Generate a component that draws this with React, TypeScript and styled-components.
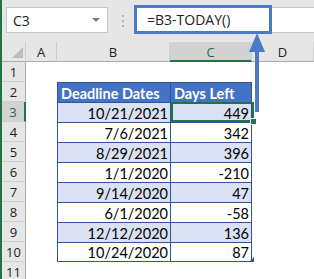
import React from "react";
import styled, { createGlobalStyle } from "styled-components";

const Global = createGlobalStyle`
  html, body { margin: 0; padding: 0; background: #ffffff; }
  body { width: 314px; height: 279px; overflow: hidden; }
  * { box-sizing: border-box; }
`;

const Frame = styled.div`
  position: relative;
  width: 314px;
  height: 279px;
  overflow: hidden;
  border-left: 2px solid #217346;
  background: #ffffff;
  font-family: "Open Sans", "Liberation Sans", sans-serif;
`;

const TopBar = styled.div`
  height: 42px;
  background: #e6e6e6;
  display: flex;
  align-items: flex-start;
  padding-left: 4px;
`;

const NameBox = styled.div`
  margin-top: 7px;
  width: 102px;
  height: 26px;
  background: #ffffff;
  border: 1px solid #c6c6c6;
  display: flex;
  align-items: center;
  justify-content: space-between;
  padding: 0 6px 0 6px;
  font-size: 14px;
  color: #222;
`;

const Caret = styled.span`
  width: 0;
  height: 0;
  border-left: 4px solid transparent;
  border-right: 4px solid transparent;
  border-top: 4px solid #7a7a7a;
  margin-right: 1px;
`;

const Dots = styled.div`
  margin: 15px 0 0 14px;
  width: 2px;
  display: flex;
  flex-direction: column;
  gap: 3px;
  span {
    width: 2px;
    height: 2px;
    background: #b4b4b4;
  }
`;

const FormulaField = styled.div`
  position: relative;
  margin: 7px 0 0 10px;
  flex: 1;
  height: 26px;
  background: #ffffff;
  border-top: 1px solid #c6c6c6;
  border-bottom: 1px solid #c6c6c6;
`;

const Highlight = styled.div`
  position: absolute;
  left: 0;
  top: -3px;
  width: 138px;
  height: 29px;
  border: 3px solid #4a7bc8;
  display: flex;
  align-items: center;
  padding-left: 10px;
  font-size: 14px;
  color: #222;
`;

const Sheet = styled.div`
  display: grid;
  grid-template-columns: 24px 31px 113px 82px 1fr;
  grid-auto-rows: 20px;
`;

const ColHead = styled.div<{ $sel?: boolean }>`
  background: ${(p) => (p.$sel ? "#d2d2d2" : "#e6e6e6")};
  border-right: 1px solid #cfcfcf;
  border-bottom: ${(p) => (p.$sel ? "2px solid #217346" : "1px solid #ababab")};
  display: flex;
  align-items: center;
  justify-content: center;
  font-size: 13px;
  color: ${(p) => (p.$sel ? "#1e6b41" : "#222")};
  padding-top: ${(p) => (p.$sel ? "1px" : "0")};
`;

const Corner = styled.div`
  background: #e6e6e6;
  border-right: 1px solid #cfcfcf;
  border-bottom: 1px solid #ababab;
  display: flex;
  align-items: flex-end;
  justify-content: flex-end;
  padding: 0 2px 3px 0;
`;

const RowHead = styled.div<{ $sel?: boolean }>`
  background: ${(p) => (p.$sel ? "#d2d2d2" : "#e6e6e6")};
  border-right: ${(p) => (p.$sel ? "2px solid #217346" : "1px solid #ababab")};
  border-bottom: 1px solid #cfcfcf;
  display: flex;
  align-items: center;
  justify-content: center;
  font-size: 13px;
  color: ${(p) => (p.$sel ? "#1e6b41" : "#222")};
`;

const Blank = styled.div``;

const TCell = styled.div<{ $head?: boolean; $band?: boolean; $left?: boolean; $last?: boolean }>`
  background: ${(p) => (p.$head ? "#4472c4" : p.$band ? "#d9e1f2" : "#ffffff")};
  border-top: 1px solid #2f5597;
  border-bottom: ${(p) => (p.$last ? "1px solid #2f5597" : "none")};
  border-left: 1px solid #2f5597;
  border-right: ${(p) => (p.$left ? "none" : "1px solid #2f5597")};
  display: flex;
  align-items: center;
  justify-content: ${(p) => (p.$head ? "flex-start" : "flex-end")};
  padding: ${(p) => (p.$head ? "1px 0 0 3px" : "1px 2px 0 0")};
  font-family: Lato, "Liberation Sans", sans-serif;
  font-size: 14.5px;
  font-weight: ${(p) => (p.$head ? 700 : 400)};
  color: ${(p) => (p.$head ? "#ffffff" : "#000000")};
  white-space: nowrap;
`;

const Selection = styled.div`
  position: absolute;
  left: 169px;
  top: 102px;
  width: 83px;
  height: 20px;
  border: 2px solid #217346;
  pointer-events: none;
`;

const FillHandle = styled.div`
  position: absolute;
  left: 248px;
  top: 118px;
  width: 7px;
  height: 7px;
  background: #217346;
  border: 1px solid #ffffff;
`;

const ResizeMark = styled.svg`
  position: absolute;
  left: 247px;
  top: 257px;
`;

const Arrow = styled.svg`
  position: absolute;
  left: 244px;
  top: 33px;
`;

const rows: [string, string][] = [
  ["10/21/2021", "449"],
  ["7/6/2021", "342"],
  ["8/29/2021", "396"],
  ["1/1/2020", "-210"],
  ["9/14/2020", "47"],
  ["6/1/2020", "-58"],
  ["12/12/2020", "136"],
  ["10/24/2020", "87"],
];

export default function App() {
  return (
    <>
      <Global />
      <Frame>
        <TopBar>
          <NameBox>
            <span>C3</span>
            <Caret />
          </NameBox>
          <Dots>
            <span />
            <span />
            <span />
          </Dots>
          <FormulaField>
            <Highlight>=B3-TODAY()</Highlight>
          </FormulaField>
        </TopBar>
        <Sheet>
          <Corner>
            <svg width="11" height="11" viewBox="0 0 11 11">
              <polygon points="11,0 11,11 0,11" fill="#bdbdbd" />
            </svg>
          </Corner>
          <ColHead>A</ColHead>
          <ColHead>B</ColHead>
          <ColHead $sel>C</ColHead>
          <ColHead>D</ColHead>

          <RowHead>1</RowHead>
          <Blank />
          <Blank />
          <Blank />
          <Blank />

          <RowHead>2</RowHead>
          <Blank />
          <TCell $head $left>Deadline Dates</TCell>
          <TCell $head>Days Left</TCell>
          <Blank />

          {rows.map(([d, n], i) => (
            <React.Fragment key={i}>
              <RowHead $sel={i === 0}>{i + 3}</RowHead>
              <Blank />
              <TCell $left $band={i % 2 === 0} $last={i === rows.length - 1}>{d}</TCell>
              <TCell $band={i % 2 === 0} $last={i === rows.length - 1}>{n}</TCell>
              <Blank />
            </React.Fragment>
          ))}

          <RowHead>11</RowHead>
          <Blank />
          <Blank />
          <Blank />
          <Blank />
        </Sheet>
        <Selection />
        <FillHandle />
        <ResizeMark width="5" height="5" viewBox="0 0 5 5">
          <polygon points="5,0 5,5 0,5" fill="#2f5597" />
        </ResizeMark>
        <Arrow width="22" height="82" viewBox="0 0 22 82">
          <polygon points="11,0 19,19 3,19" fill="#4a7bc8" />
          <rect x="9" y="18" width="4" height="61" fill="#4a7bc8" />
        </Arrow>
      </Frame>
    </>
  );
}
